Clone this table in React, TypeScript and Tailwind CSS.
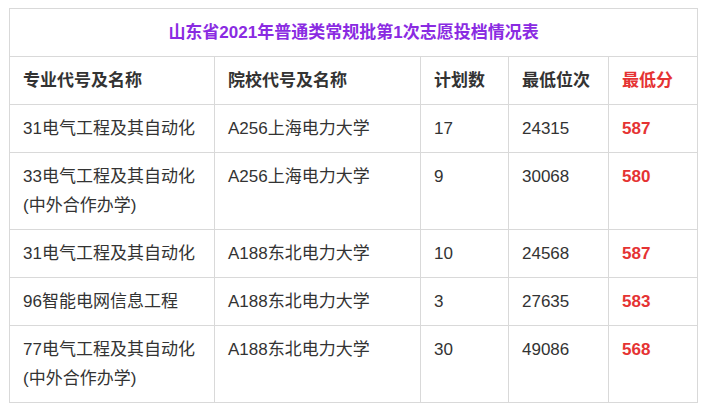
const rows = [
  { major: ["31电气工程及其自动化"], school: "A256上海电力大学", plan: "17", rank: "24315", score: "587" },
  { major: ["33电气工程及其自动化", "(中外合作办学)"], school: "A256上海电力大学", plan: "9", rank: "30068", score: "580" },
  { major: ["31电气工程及其自动化"], school: "A188东北电力大学", plan: "10", rank: "24568", score: "587" },
  { major: ["96智能电网信息工程"], school: "A188东北电力大学", plan: "3", rank: "27635", score: "583" },
  { major: ["77电气工程及其自动化", "(中外合作办学)"], school: "A188东北电力大学", plan: "30", rank: "49086", score: "568" },
];

const cell = "border border-[#d9d9d9] px-[13px] py-[9px] align-top text-left";

export default function App() {
  return (
    <div
      className="min-h-screen bg-white pl-[9px] pt-[8px] text-[17px] leading-[29px] text-[#333333]"
      style={{ fontFamily: '"Liberation Sans", "Noto Sans CJK SC", sans-serif' }}
    >
      <table className="w-[688px] table-fixed border-collapse">
        <colgroup>
          <col className="w-[205px]" />
          <col className="w-[206px]" />
          <col className="w-[88px]" />
          <col className="w-[100px]" />
          <col className="w-[89px]" />
        </colgroup>
        <thead>
          <tr>
            <th colSpan={5} className="border border-[#d9d9d9] py-[9px] text-center font-bold text-[#8a2be2]">
              山东省2021年普通类常规批第1次志愿投档情况表
            </th>
          </tr>
          <tr className="font-bold">
            <th className={cell}>专业代号及名称</th>
            <th className={cell}>院校代号及名称</th>
            <th className={cell}>计划数</th>
            <th className={cell}>最低位次</th>
            <th className={`${cell} text-[#e53333]`}>最低分</th>
          </tr>
        </thead>
        <tbody>
          {rows.map((r, i) => (
            <tr key={i}>
              <td className={cell}>
                {r.major.map((m) => (
                  <div key={m}>{m}</div>
                ))}
              </td>
              <td className={cell}>{r.school}</td>
              <td className={cell}>{r.plan}</td>
              <td className={cell}>{r.rank}</td>
              <td className={`${cell} font-bold text-[#e53333]`}>{r.score}</td>
            </tr>
          ))}
        </tbody>
      </table>
    </div>
  );
}
